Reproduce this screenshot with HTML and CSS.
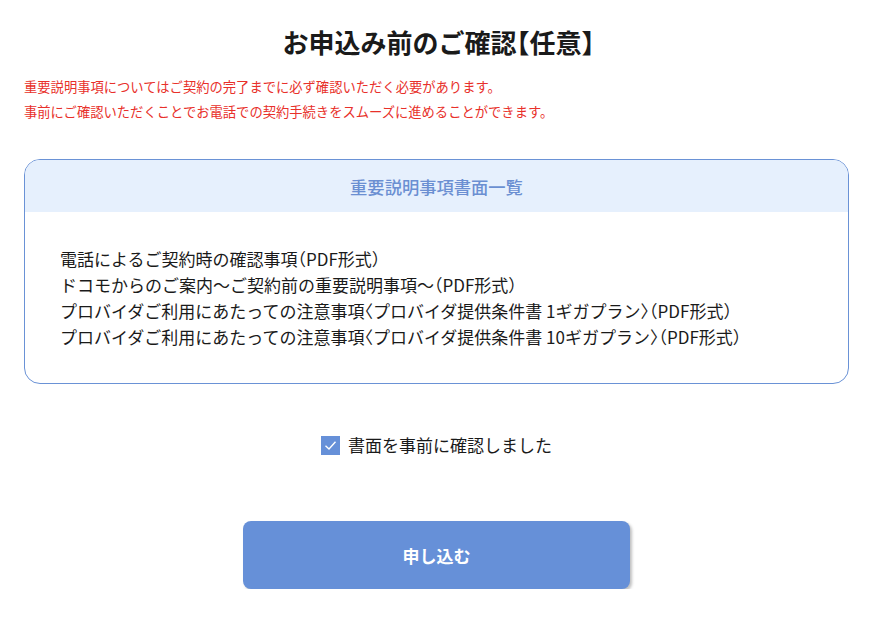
FILE: index.html
```html
<!DOCTYPE html>
<html lang="ja">
<head>
<meta charset="utf-8">
<link rel="stylesheet" href="styles.css">
</head>
<body>
<main class="page">
  <h1 class="title">お申込み前のご確認<span class="br">【</span>任意<span class="br">】</span></h1>
  <div class="notice">
    <p>重要説明事項についてはご契約の完了までに必ず確認いただく必要があります。</p>
    <p>事前にご確認いただくことでお電話での契約手続きをスムーズに進めることができます。</p>
  </div>
  <section class="card">
    <div class="card-head">重要説明事項書面一覧</div>
    <ul class="doc-list">
      <li>電話によるご契約時の確認事項<span class="br">（</span>PDF形式<span class="br">）</span></li>
      <li>ドコモからのご案内～ご契約前の重要説明事項～<span class="br">（</span>PDF形式<span class="br">）</span></li>
      <li>プロバイダご利用にあたっての注意事項<span class="br">〈</span>プロバイダ提供条件書 1ギガプラン<span class="br">〉</span><span class="br">（</span>PDF形式<span class="br">）</span></li>
      <li>プロバイダご利用にあたっての注意事項<span class="br">〈</span>プロバイダ提供条件書 10ギガプラン<span class="br">〉</span><span class="br">（</span>PDF形式<span class="br">）</span></li>
    </ul>
  </section>
  <label class="confirm">
    <span class="check"><svg width="19" height="19" viewBox="0 0 19 19"><path d="M4.5 9.8 L8 13 L14.5 5.8" fill="none" stroke="#fff" stroke-width="1.4"/></svg></span>
    <span>書面を事前に確認しました</span>
  </label>
  <div class="actions">
    <button class="submit">申し込む</button>
  </div>
</main>
</body>
</html>
```
FILE: styles.css
```css
* { box-sizing: border-box; }
html, body { margin: 0; padding: 0; background: #fff; }
body {
  font-family: "Noto Sans CJK JP", "Noto Sans", sans-serif;
  color: #1a1a1a;
}
.br { font-feature-settings: "halt"; }
.page {
  padding: 24px 33px 0 24px;
}
.title {
  margin: 0;
  text-align: center;
  font-size: 26px;
  font-weight: 700;
  line-height: 36px;
  padding-left: 4px;
}
.notice {
  margin-top: 14px;
  color: #e8302a;
  font-size: 13.3px;
  line-height: 25px;
}
.notice p { margin: 0; }
.card {
  margin-top: 35px;
  border: 1px solid #6a92d6;
  border-radius: 16px;
  overflow: hidden;
}
.card-head {
  background: #e6f0fd;
  height: 52px;
  display: flex;
  align-items: center;
  justify-content: center;
  color: #6b8fd2;
  font-size: 17.3px;
  font-weight: 500;
}
.doc-list {
  list-style: none;
  margin: 0;
  padding: 34px 35px 33px;
  font-size: 17px;
  line-height: 26px;
}
.confirm {
  margin-top: 49px;
  display: flex;
  align-items: center;
  justify-content: center;
  gap: 8px;
  font-size: 17px;
  line-height: 24px;
}
.check {
  width: 19px;
  height: 19px;
  background: #6690d8;
  display: block;
}
.check svg { display: block; }
.actions {
  margin-top: 64px;
  display: flex;
  justify-content: center;
}
.submit {
  width: 387px;
  height: 68px;
  border: none;
  border-radius: 8px;
  background: #6690d8;
  color: #fff;
  font-family: inherit;
  font-size: 17px;
  font-weight: 700;
  box-shadow: 2px 2px 3px rgba(0,0,0,0.25);
}
```
